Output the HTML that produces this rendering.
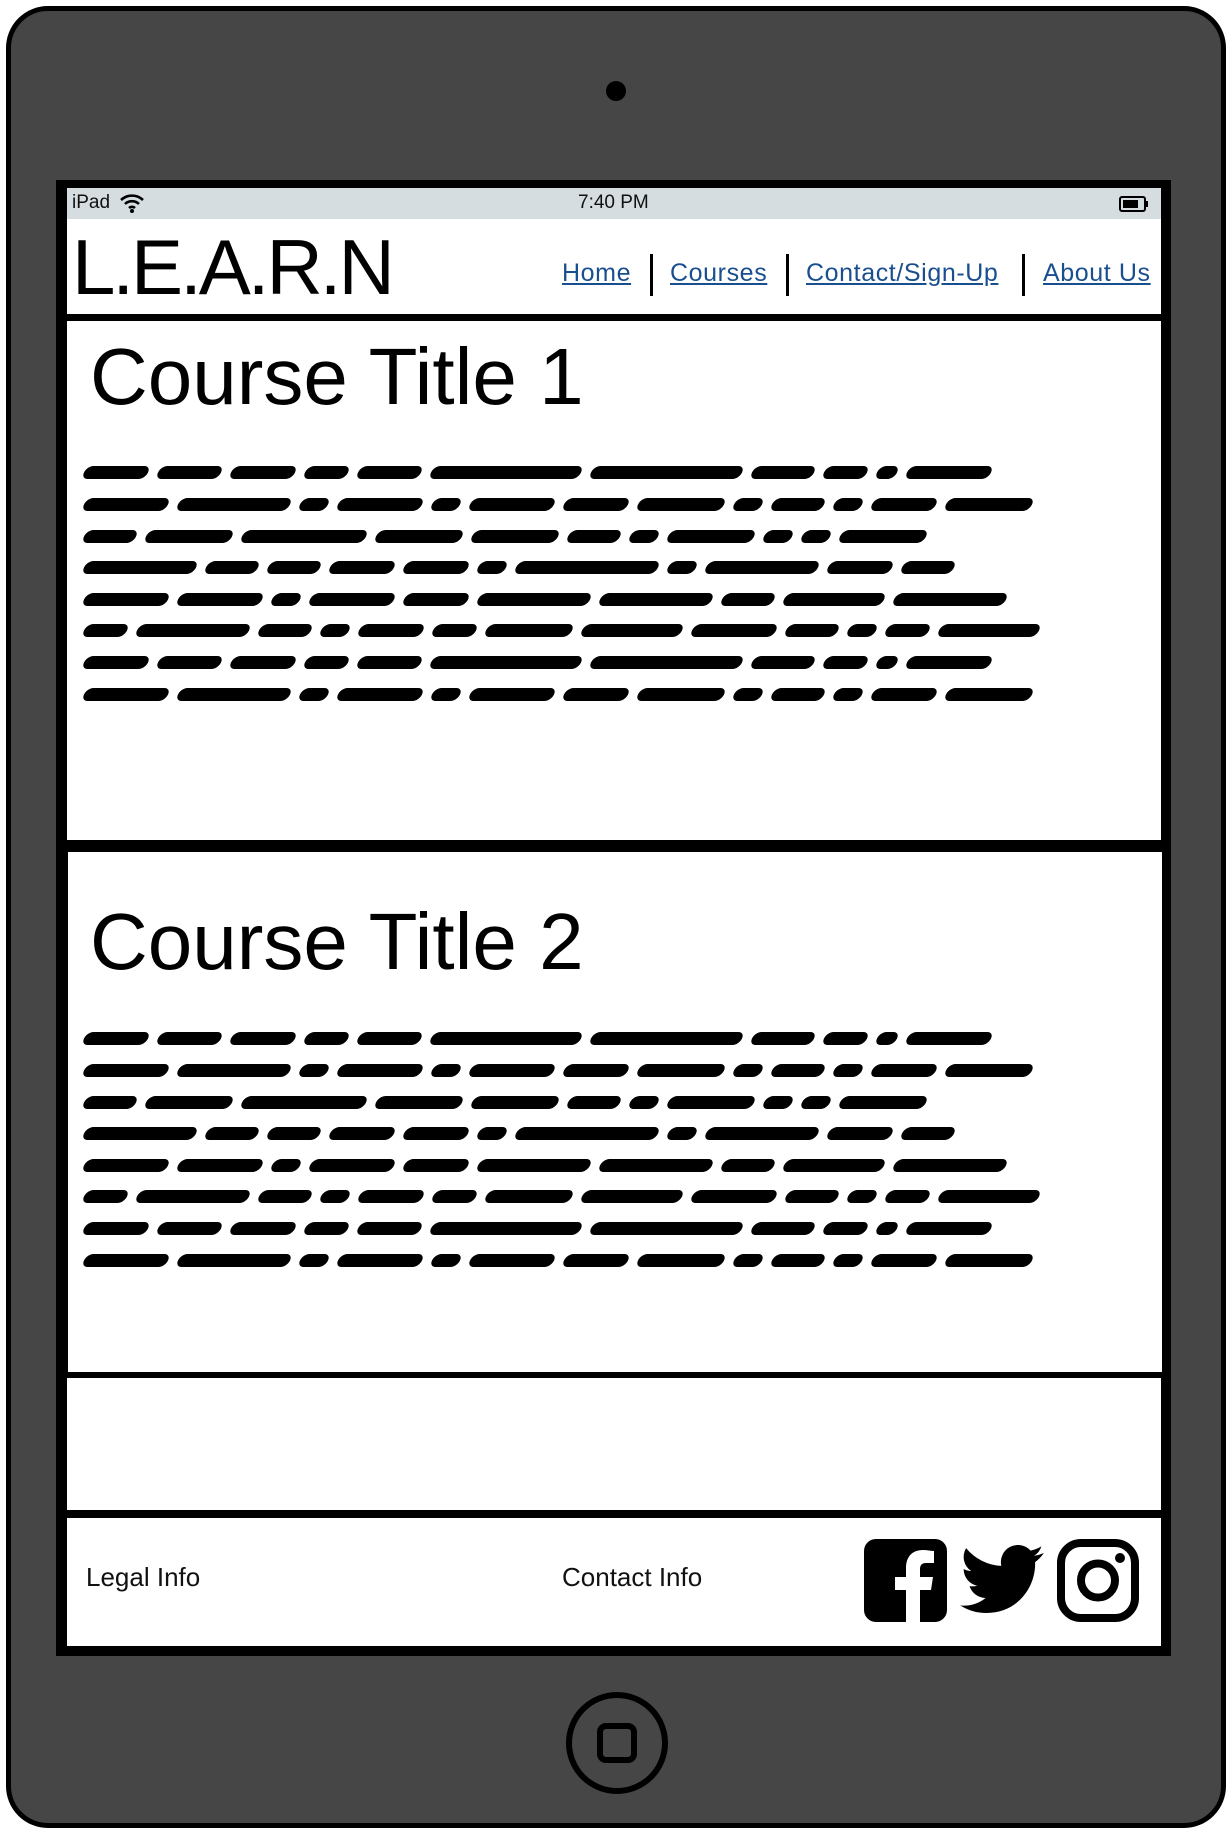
<!DOCTYPE html>
<html><head><meta charset="utf-8">
<style>
*{margin:0;padding:0;box-sizing:border-box}
html,body{width:1232px;height:1832px;background:#fff;overflow:hidden;font-family:"Liberation Sans",sans-serif}
.dev{position:absolute;left:6px;top:6px;width:1220px;height:1822px;background:#464646;border:5px solid #000;border-radius:42px}
.cam{position:absolute;left:606px;top:81px;width:20px;height:20px;border-radius:50%;background:#000}
.scr{position:absolute;left:56px;top:180px;width:1115px;height:1476px;background:#000}
.w{position:absolute;background:#fff;left:67px;width:1094px}
.status{position:absolute;left:67px;top:188px;width:1094px;height:31px;background:#d5dde0;font-size:19px;color:#111}
.logo{position:absolute;left:72px;top:222px;font-size:78px;letter-spacing:-3px;color:#000;line-height:90px}
.nav{position:absolute;top:256px;font-size:25px;color:#1a4f8f;text-decoration:underline;line-height:34px;letter-spacing:0.6px}
.sep{position:absolute;top:254px;width:3px;height:42px;background:#000}
.title{position:absolute;left:90px;font-size:80px;line-height:90px;color:#000}
.sc{position:absolute;left:84px;height:14px;white-space:nowrap}
.sc span{display:inline-block;height:13px;background:#000;border-radius:7px;margin-right:10px;transform:skewX(-25deg);vertical-align:top}
.ft{position:absolute;top:1561px;font-size:26px;color:#111;line-height:32px}
.home{position:absolute;left:566px;top:1692px;width:102px;height:102px;border:6px solid #000;border-radius:50%}
.home i{position:absolute;left:25px;top:25px;width:40px;height:40px;border:6px solid #000;border-radius:9px}
</style></head><body>
<div class="dev"></div>
<div class="cam"></div>
<div class="scr"></div>
<div class="status"><span style="position:absolute;left:5px;top:4px">iPad</span>
<svg style="position:absolute;left:52px;top:5px" width="26" height="20" viewBox="0 0 26 20"><path d="M2 7a16 16 0 0 1 22 0M6 11a10 10 0 0 1 14 0M10 15a4.5 4.5 0 0 1 6 0" stroke="#000" stroke-width="2.6" fill="none"/><circle cx="13" cy="18" r="2" fill="#000"/></svg>
<span style="position:absolute;left:511px;top:4px">7:40 PM</span>
<svg style="position:absolute;left:1052px;top:8px" width="30" height="16" viewBox="0 0 30 16"><rect x="1" y="1" width="25" height="14" rx="2" fill="none" stroke="#000" stroke-width="2"/><rect x="4" y="4" width="15" height="8" fill="#000"/><rect x="27" y="5" width="2" height="6" fill="#000"/></svg></div>
<div class="w" style="top:219px;height:95px"></div>
<div class="logo">L.E.A.R.N</div>
<div class="nav" style="left:562px">Home</div><div class="sep" style="left:650px"></div>
<div class="nav" style="left:670px">Courses</div><div class="sep" style="left:786px"></div>
<div class="nav" style="left:806px">Contact/Sign-Up</div><div class="sep" style="left:1022px"></div>
<div class="nav" style="left:1043px">About Us</div>

<div class="w" style="top:321px;height:519px"></div>
<div class="title" style="top:332px">Course Title 1</div>
<div class="w" style="top:852px;height:520px;left:68px"></div>
<div class="title" style="top:897px">Course Title 2</div>
<div class="w" style="top:1378px;height:132px"></div>
<div class="w" style="top:1518px;height:128px"></div>

<div class="sc" style="top:466px"><span style="width:64px"></span><span style="width:63px"></span><span style="width:64px"></span><span style="width:43px"></span><span style="width:63px"></span><span style="width:150px"></span><span style="width:151px"></span><span style="width:62px"></span><span style="width:43px"></span><span style="width:20px"></span><span style="width:84px"></span></div>
<div class="sc" style="top:498px"><span style="width:84px"></span><span style="width:112px"></span><span style="width:28px"></span><span style="width:84px"></span><span style="width:28px"></span><span style="width:84px"></span><span style="width:64px"></span><span style="width:86px"></span><span style="width:28px"></span><span style="width:52px"></span><span style="width:28px"></span><span style="width:64px"></span><span style="width:86px"></span></div>
<div class="sc" style="top:530px"><span style="width:52px"></span><span style="width:86px"></span><span style="width:124px"></span><span style="width:86px"></span><span style="width:86px"></span><span style="width:52px"></span><span style="width:28px"></span><span style="width:86px"></span><span style="width:28px"></span><span style="width:28px"></span><span style="width:86px"></span></div>
<div class="sc" style="top:561px"><span style="width:112px"></span><span style="width:52px"></span><span style="width:52px"></span><span style="width:64px"></span><span style="width:64px"></span><span style="width:28px"></span><span style="width:142px"></span><span style="width:28px"></span><span style="width:112px"></span><span style="width:64px"></span><span style="width:52px"></span></div>
<div class="sc" style="top:593px"><span style="width:84px"></span><span style="width:84px"></span><span style="width:28px"></span><span style="width:84px"></span><span style="width:64px"></span><span style="width:112px"></span><span style="width:112px"></span><span style="width:52px"></span><span style="width:100px"></span><span style="width:112px"></span></div>
<div class="sc" style="top:624px"><span style="width:43px"></span><span style="width:112px"></span><span style="width:52px"></span><span style="width:28px"></span><span style="width:64px"></span><span style="width:43px"></span><span style="width:86px"></span><span style="width:100px"></span><span style="width:84px"></span><span style="width:52px"></span><span style="width:28px"></span><span style="width:43px"></span><span style="width:100px"></span></div>
<div class="sc" style="top:656px"><span style="width:64px"></span><span style="width:63px"></span><span style="width:64px"></span><span style="width:43px"></span><span style="width:63px"></span><span style="width:150px"></span><span style="width:151px"></span><span style="width:62px"></span><span style="width:43px"></span><span style="width:20px"></span><span style="width:84px"></span></div>
<div class="sc" style="top:688px"><span style="width:84px"></span><span style="width:112px"></span><span style="width:28px"></span><span style="width:84px"></span><span style="width:28px"></span><span style="width:84px"></span><span style="width:64px"></span><span style="width:86px"></span><span style="width:28px"></span><span style="width:52px"></span><span style="width:28px"></span><span style="width:64px"></span><span style="width:86px"></span></div>

<div class="sc" style="top:1032px"><span style="width:64px"></span><span style="width:63px"></span><span style="width:64px"></span><span style="width:43px"></span><span style="width:63px"></span><span style="width:150px"></span><span style="width:151px"></span><span style="width:62px"></span><span style="width:43px"></span><span style="width:20px"></span><span style="width:84px"></span></div>
<div class="sc" style="top:1064px"><span style="width:84px"></span><span style="width:112px"></span><span style="width:28px"></span><span style="width:84px"></span><span style="width:28px"></span><span style="width:84px"></span><span style="width:64px"></span><span style="width:86px"></span><span style="width:28px"></span><span style="width:52px"></span><span style="width:28px"></span><span style="width:64px"></span><span style="width:86px"></span></div>
<div class="sc" style="top:1096px"><span style="width:52px"></span><span style="width:86px"></span><span style="width:124px"></span><span style="width:86px"></span><span style="width:86px"></span><span style="width:52px"></span><span style="width:28px"></span><span style="width:86px"></span><span style="width:28px"></span><span style="width:28px"></span><span style="width:86px"></span></div>
<div class="sc" style="top:1127px"><span style="width:112px"></span><span style="width:52px"></span><span style="width:52px"></span><span style="width:64px"></span><span style="width:64px"></span><span style="width:28px"></span><span style="width:142px"></span><span style="width:28px"></span><span style="width:112px"></span><span style="width:64px"></span><span style="width:52px"></span></div>
<div class="sc" style="top:1159px"><span style="width:84px"></span><span style="width:84px"></span><span style="width:28px"></span><span style="width:84px"></span><span style="width:64px"></span><span style="width:112px"></span><span style="width:112px"></span><span style="width:52px"></span><span style="width:100px"></span><span style="width:112px"></span></div>
<div class="sc" style="top:1190px"><span style="width:43px"></span><span style="width:112px"></span><span style="width:52px"></span><span style="width:28px"></span><span style="width:64px"></span><span style="width:43px"></span><span style="width:86px"></span><span style="width:100px"></span><span style="width:84px"></span><span style="width:52px"></span><span style="width:28px"></span><span style="width:43px"></span><span style="width:100px"></span></div>
<div class="sc" style="top:1222px"><span style="width:64px"></span><span style="width:63px"></span><span style="width:64px"></span><span style="width:43px"></span><span style="width:63px"></span><span style="width:150px"></span><span style="width:151px"></span><span style="width:62px"></span><span style="width:43px"></span><span style="width:20px"></span><span style="width:84px"></span></div>
<div class="sc" style="top:1254px"><span style="width:84px"></span><span style="width:112px"></span><span style="width:28px"></span><span style="width:84px"></span><span style="width:28px"></span><span style="width:84px"></span><span style="width:64px"></span><span style="width:86px"></span><span style="width:28px"></span><span style="width:52px"></span><span style="width:28px"></span><span style="width:64px"></span><span style="width:86px"></span></div>

<div class="ft" style="left:86px">Legal Info</div>
<div class="ft" style="left:562px">Contact Info</div>

<svg style="position:absolute;left:864px;top:1539px" width="83" height="83" viewBox="0 0 83 83"><path d="M12 0h59a12 12 0 0 1 12 12v59a12 12 0 0 1-12 12H56V51h11l2-13H56v-8c0-4 2-6 6-6h8V12c-3 0-7-1-11-1-11 0-17 7-17 18v9H31v13h11v32H12A12 12 0 0 1 0 71V12A12 12 0 0 1 12 0z" fill="#000"/></svg>
<svg style="position:absolute;left:960px;top:1545px" width="84" height="68" viewBox="0 0 24 19.5"><path d="M24 2.3a9.8 9.8 0 0 1-2.8.8A4.9 4.9 0 0 0 23.3.4a9.9 9.9 0 0 1-3.1 1.2A4.9 4.9 0 0 0 11.8 6 14 14 0 0 1 1.7.9a4.9 4.9 0 0 0 1.5 6.6A4.9 4.9 0 0 1 1 6.9a4.9 4.9 0 0 0 3.900 4.8 4.9 4.9 0 0 1-2.2.1 4.9 4.9 0 0 0 4.6 3.4A9.9 9.9 0 0 1 0 17.3a14 14 0 0 0 7.5 2.2c9.1 0 14-7.5 14-14v-.6A10 10 0 0 0 24 2.3z" fill="#000"/></svg>
<svg style="position:absolute;left:1057px;top:1539px" width="82" height="83" viewBox="0 0 82 83"><rect x="4" y="4" width="74" height="75" rx="20" fill="none" stroke="#000" stroke-width="8"/><circle cx="41" cy="41.5" r="17" fill="none" stroke="#000" stroke-width="8"/><circle cx="63" cy="19" r="5" fill="#000"/></svg>

<div class="home"><i></i></div>
</body></html>
